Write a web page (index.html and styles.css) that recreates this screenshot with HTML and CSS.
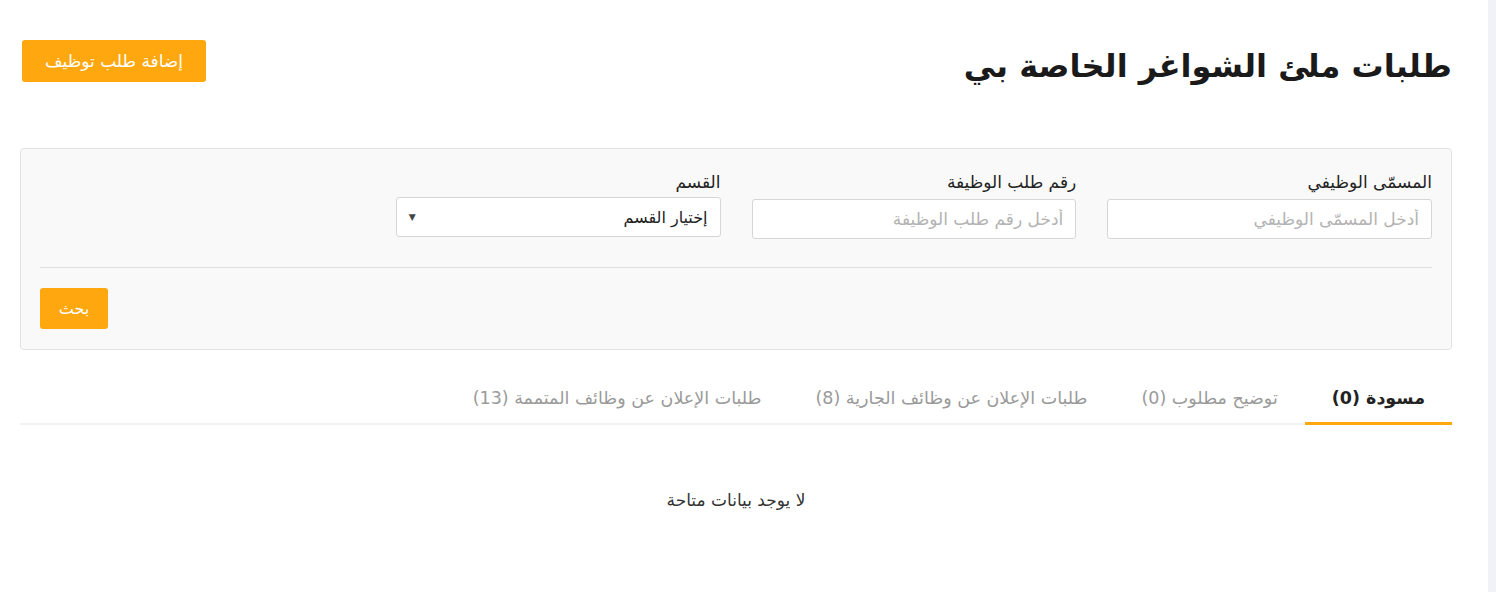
FILE: index.html
```html
<!DOCTYPE html>
<html lang="ar" dir="rtl">
<head>
    <meta charset="UTF-8">
    <meta name="viewport" content="width=device-width, initial-scale=1.0">
    <title>طلبات ملئ الشواغر الخاصة بي</title>
    <link rel="stylesheet" href="styles.css">
</head>
<body>
    <div class="scroll-track"></div>
    <div class="page">
        <div class="page-head">
            <h1 class="page-title">طلبات ملئ الشواغر الخاصة بي</h1>
            <button class="btn btn-add">إضافة طلب توظيف</button>
        </div>

        <div class="filter-card">
            <div class="filter-grid">
                <div class="field">
                    <label>المسمّى الوظيفي</label>
                    <input type="text" placeholder="أدخل المسمّى الوظيفي">
                </div>
                <div class="field">
                    <label>رقم طلب الوظيفة</label>
                    <input type="text" placeholder="أدخل رقم طلب الوظيفة">
                </div>
                <div class="field field-select">
                    <label>القسم</label>
                    <div class="select">
                        <span>إختيار القسم</span>
                        <span class="caret">&#9660;</span>
                    </div>
                </div>
            </div>
            <hr class="divider">
            <div class="filter-actions">
                <button class="btn btn-search">بحث</button>
            </div>
        </div>

        <div class="tabs">
            <div class="tab active">مسودة (0)</div>
            <div class="tab">توضيح مطلوب (0)</div>
            <div class="tab">طلبات الإعلان عن وظائف الجارية (8)</div>
            <div class="tab">طلبات الإعلان عن وظائف المتممة (13)</div>
        </div>

        <div class="empty">لا يوجد بيانات متاحة</div>
    </div>
</body>
</html>
```

FILE: styles.css
```css
body {
    margin: 0;
    font-family: "DejaVu Sans", "Noto Sans", sans-serif;
    color: #333;
    background: #fff;
    display: flex;
    height: 592px;
    overflow: hidden;
}

.page {
    flex: 1;
    padding: 0 36px 0 20px;
}

.scroll-track {
    width: 8px;
    background: #f0f2f8;
}

.page-head {
    display: flex;
    justify-content: space-between;
    align-items: flex-start;
    padding-top: 40px;
    height: 108px;
}

.page-title {
    margin: 0;
    font-size: 32px;
    font-weight: bold;
    color: #1a1a1a;
    line-height: 52px;
}

.btn {
    font-family: inherit;
    background: #ffa70f;
    color: #fff;
    border: none;
    border-radius: 3px;
    cursor: pointer;
}

.btn-add {
    margin-left: 2px;
    height: 42px;
    width: 184px;
    padding: 0;
    font-size: 17px;
}

.filter-card {
    background: #f9f9f9;
    border: 1px solid #e2e2e2;
    border-radius: 4px;
    padding: 20px 19px 20px 19px;
}

.filter-grid {
    display: grid;
    grid-template-columns: repeat(4, 1fr);
    column-gap: 31px;
}

.field label {
    display: block;
    font-size: 17px;
    color: #222;
    line-height: 26px;
    margin-bottom: 4px;
}

.field input {
    box-sizing: border-box;
    width: 100%;
    height: 40px;
    border: 1px solid #d6d6d6;
    border-radius: 3px;
    background: #fff;
    padding: 0 12px;
    font-family: inherit;
    font-size: 17px;
    color: #333;
}

.field input::placeholder {
    color: #b3b3b3;
}

.field-select .select {
    box-sizing: border-box;
    height: 40px;
    margin-top: -2px;
    border: 1px solid #d6d6d6;
    border-radius: 3px;
    background: #fff;
    padding: 0 12px;
    display: flex;
    align-items: center;
    justify-content: space-between;
    font-size: 16px;
    color: #222;
}

.caret {
    font-size: 9px;
    color: #444;
}

.divider {
    border: none;
    border-top: 1px solid #e0e0e0;
    margin: 28px 0 20px;
}

.filter-actions {
    display: flex;
    justify-content: flex-end;
}

.btn-search {
    height: 41px;
    width: 68px;
    font-size: 16px;
}

.tabs {
    display: flex;
    margin-top: 24px;
    border-bottom: 2px solid #f1f1f1;
}

.tab {
    padding: 12px 27px 12px;
    line-height: 24px;
    font-size: 17.5px;
    color: #9a9a9a;
    margin-bottom: -2px;
    border-bottom: 3px solid transparent;
}

.tab.active {
    color: #222;
    font-weight: bold;
    border-bottom-color: #ffa70f;
}

.empty {
    text-align: center;
    margin-top: 63px;
    line-height: 24px;
    font-size: 17px;
    color: #333;
}
```
